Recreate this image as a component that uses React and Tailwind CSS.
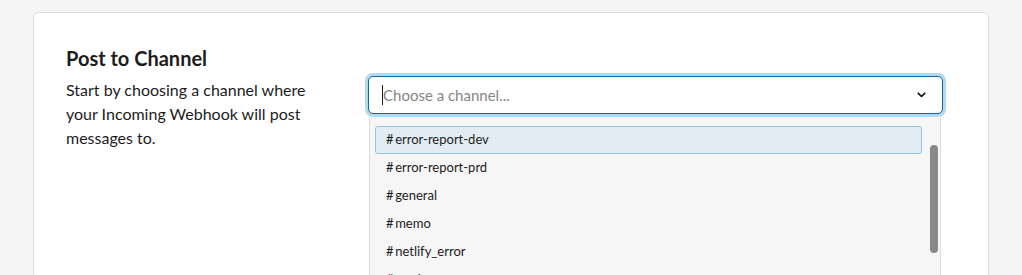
import React from 'react';

const channels = ['error-report-dev', 'error-report-prd', 'general', 'memo', 'netlify_error', 'random'];

const IconChevron = () => (
    <svg width="9" height="6" viewBox="0 0 9 6" fill="none">
        <path d="M1.3 1.3L4.5 4.4L7.7 1.3" stroke="#1d1c1d" strokeWidth="1.8" strokeLinecap="round" strokeLinejoin="round" />
    </svg>
);

const App = () => {
    return (
        <div className="h-[275px] overflow-hidden bg-[#f5f5f5] px-[33px] pt-[12px] text-[#1d1c1d]" style={{ fontFamily: 'Lato, "Noto Sans", sans-serif' }}>
            <div className="h-[400px] rounded-[6px] border border-[#dddddd] bg-white pl-[32px] pt-[33px]">
                <h2 className="text-[20px] font-bold leading-[24px]">Post to Channel</h2>
                <div className="mt-[6px] flex gap-[50px]">
                    <p className="w-[252px] shrink-0 pt-[2px] text-[16px] leading-[24px]">
                        Start by choosing a channel where your Incoming Webhook will post messages to.
                    </p>
                    <div className="relative w-[575px] shrink-0">
                        <div className="flex h-[38px] items-center justify-between rounded-[5px] border border-[#1264a3] bg-white pl-[13px] pr-[16px] shadow-[0_0_0_3px_#b2d9ef]">
                            <span className="flex items-center text-[15px] text-[#868686]">
                                <span className="h-[20px] w-px bg-[#1d1c1d]" />
                                Choose a channel...
                            </span>
                            <IconChevron />
                        </div>
                        <div className="absolute left-[1px] top-[41px] w-[572px] h-[200px] border-x border-[#dddddd] bg-[#f6f6f6] pl-[5px] pt-[9px]">
                            <div className="flex">
                                <ul className="w-[547px]">
                                    {channels.map((c, i) => (
                                        <li
                                            key={c}
                                            className={`flex h-[28px] items-center rounded-[3px] border pl-[10px] text-[13px] ${i === 0 ? 'border-[#8fc7e8] bg-[#e1ecf3]' : 'border-transparent'}`}
                                        >
                                            #&#8201;{c}
                                        </li>
                                    ))}
                                </ul>
                                <div className="ml-[8px] mt-[19px] h-[108px] w-[8px] rounded-[4px] bg-[#888888]" />
                            </div>
                        </div>
                    </div>
                </div>
            </div>
        </div>
    );
};

export default App;
